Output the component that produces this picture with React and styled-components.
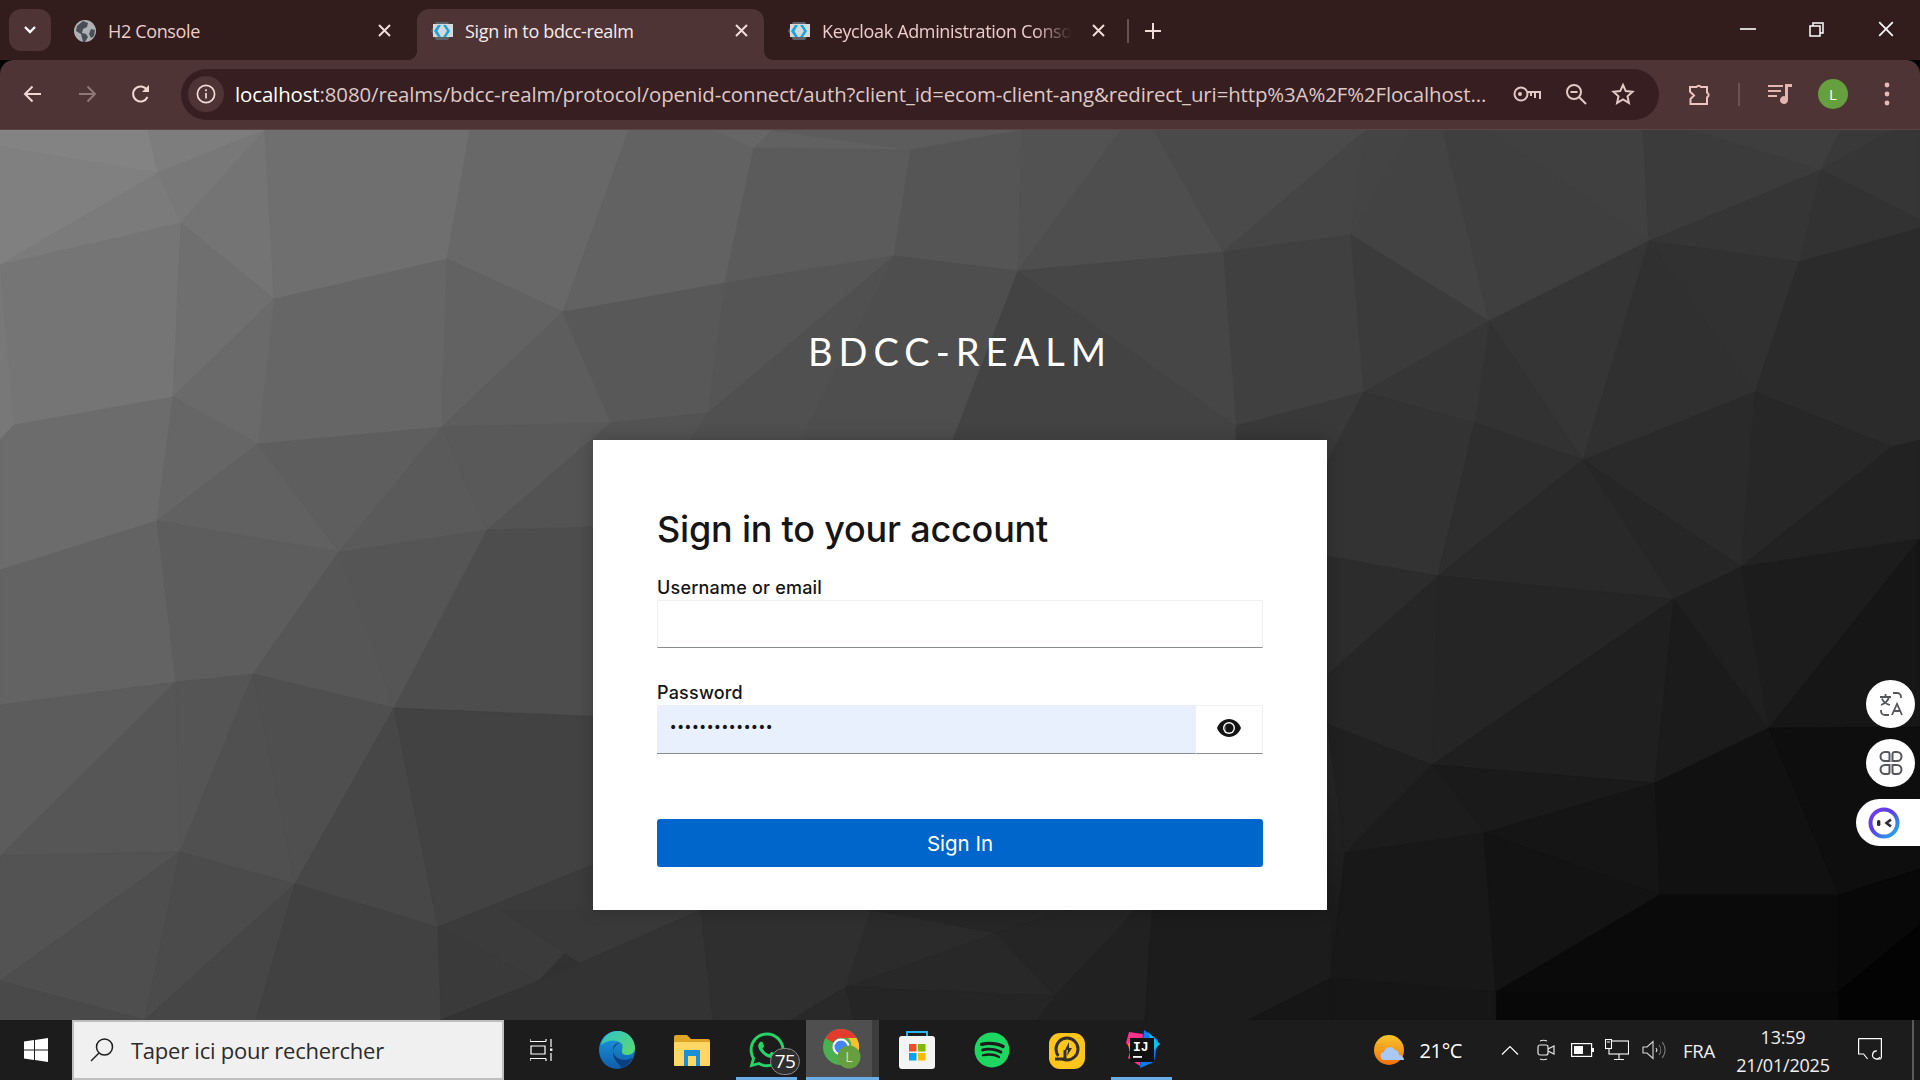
import styled, { createGlobalStyle } from "styled-components";
import { FaWhatsapp, FaSpotify } from "react-icons/fa";

const UI_FONT = `"Open Sans", "Noto Sans", sans-serif`;
const CARD_FONT = `Inter, "Noto Sans", sans-serif`;

const GlobalStyle = createGlobalStyle`
  html, body {
    margin: 0;
    padding: 0;
    height: 100%;
    overflow: hidden;
    background: #000;
  }
  * { box-sizing: border-box; }
`;

// [grey level, points] : low poly background, traced from the login theme picture
const MESH = [
  [0x85, "0,0 148,0 158,43 0,17"],
  [0x7e, "148,0 265,0 158,43"],
  [0x82, "0,17 158,43 0,135"],
  [0x7c, "158,43 181,93 0,135"],
  [0x76, "158,43 265,0 181,93"],
  [0x72, "181,93 265,0 274,169"],
  [0x6d, "265,0 470,0 447,129 274,169"],
  [0x64, "470,0 629,0 563,182 447,129"],
  [0x75, "0,135 181,93 173,267 14,295"],
  [0x6c, "181,93 274,169 173,267"],
  [0x63, "274,169 447,129 442,297 258,314"],
  [0x68, "274,169 258,314 173,267"],
  [0x5e, "447,129 563,182 442,297"],
  [0x5a, "563,182 611,293 442,297"],
  [0x5e, "629,0 713,0 754,18 725,153 563,182"],
  [0x53, "563,182 725,153 708,283 611,292"],
  [0x7a, "0,135 14,295 0,310"],
  [0x6a, "14,295 173,267 157,391 0,440 0,310"],
  [0x63, "173,267 258,314 157,391"],
  [0x5e, "258,314 339,422 157,391"],
  [0x5a, "258,314 442,297 339,422"],
  [0x56, "442,297 487,400 339,422"],
  [0x55, "442,297 611,293 487,400"],
  [0x4f, "611,293 708,283 680,395 487,400"],
  [0x62, "0,440 157,391 176,552 0,575"],
  [0x5c, "157,391 339,422 253,544 176,552"],
  [0x53, "339,422 394,578 253,544"],
  [0x52, "339,422 487,400 394,578"],
  [0x4a, "487,400 680,395 680,590 394,578"],
  [0x5c, "0,575 176,552 0,726"],
  [0x55, "176,552 180,722 0,726"],
  [0x53, "176,552 253,544 180,722"],
  [0x4d, "253,544 295,754 180,722"],
  [0x4b, "253,544 394,578 295,754"],
  [0x43, "394,578 438,797 295,754"],
  [0x3e, "394,578 680,590 680,700 438,797"],
  [0x52, "0,726 180,722 0,851"],
  [0x4d, "180,722 145,890 0,851"],
  [0x49, "180,722 295,754 145,890"],
  [0x44, "295,754 256,890 145,890"],
  [0x3e, "295,754 438,797 441,890 256,890"],
  [0x36, "438,797 680,700 538,851"],
  [0x35, "438,797 538,851 441,890"],
  [0x45, "0,851 145,890 0,890"],
  [0x35, "500,780 701,780 580,833"],
  [0x2d, "441,890 538,851 580,833 701,780 713,890"],
  [0x2c, "701,780 871,780 846,857 791,890 713,890"],
  [0x26, "871,780 996,803 846,857"],
  [0x24, "846,857 1055,866 996,803"],
  [0x1f, "871,780 1070,780 996,803"],
  [0x20, "996,803 1070,780 1135,780 1055,866"],
  [0x24, "791,890 846,857 854,890"],
  [0x21, "846,857 1055,866 1038,890 854,890"],
  [0x1c, "1135,780 1152,780 1145,890 1038,890 1055,866"],
  [0x17, "1152,780 1331,780 1331,848 1249,890 1145,890"],
  [0x11, "1331,848 1331,890 1249,890"],
  [0x66, "713,0 772,0 754,18"],
  [0x5e, "754,18 911,20 772,0"],
  [0x58, "911,20 1022,0 772,0"],
  [0x56, "725,153 754,18 911,20 894,126"],
  [0x50, "911,20 1022,0 1018,141 894,126"],
  [0x4d, "1022,0 1121,0 1018,141"],
  [0x48, "1121,0 1154,0 1223,122 1018,141"],
  [0x44, "1154,0 1366,0 1223,122"],
  [0x3f, "1366,0 1351,105 1223,122"],
  [0x3a, "1223,122 1351,105 1364,262 1236,296"],
  [0x40, "1018,141 1223,122 1236,296"],
  [0x4a, "894,126 1018,141 953,310 800,310"],
  [0x50, "725,153 894,126 708,283"],
  [0x4a, "708,283 894,126 800,310 690,310"],
  [0x3e, "1018,141 1236,296 1236,310 953,310"],
  [0x33, "1236,296 1364,262 1327,332 1236,332"],
  [0x3c, "1351,105 1366,0 1411,0"],
  [0x3e, "1351,105 1411,0 1443,0 1489,191"],
  [0x3a, "1443,0 1488,0 1649,111 1489,191"],
  [0x3d, "1488,0 1643,0 1649,111"],
  [0x38, "1643,0 1692,0 1821,40 1649,111"],
  [0x3f, "1692,0 1841,0 1821,40"],
  [0x38, "1841,0 1892,0 1821,40"],
  [0x34, "1821,40 1892,0 1920,0 1920,90"],
  [0x30, "1821,40 1920,90 1920,98 1799,132"],
  [0x32, "1649,111 1821,40 1799,132"],
  [0x35, "1351,105 1489,191 1364,262"],
  [0x30, "1489,191 1649,111 1583,330"],
  [0x2c, "1489,191 1583,330 1475,293"],
  [0x30, "1489,191 1475,293 1364,262"],
  [0x2c, "1649,111 1799,132 1755,262"],
  [0x2b, "1649,111 1755,262 1583,330"],
  [0x2a, "1799,132 1920,98 1920,310 1892,317"],
  [0x29, "1799,132 1892,317 1755,262"],
  [0x25, "1755,262 1892,317 1741,437"],
  [0x27, "1755,262 1741,437 1583,330"],
  [0x22, "1583,330 1741,437 1674,469"],
  [0x21, "1892,317 1920,310 1920,409 1741,437"],
  [0x2e, "1327,332 1364,262 1475,293 1438,446 1327,426"],
  [0x28, "1475,293 1583,330 1438,446"],
  [0x24, "1583,330 1674,469 1438,446"],
  [0x27, "1327,426 1438,446 1327,545"],
  [0x21, "1438,446 1674,469 1432,635"],
  [0x21, "1327,545 1438,446 1432,635 1327,594"],
  [0x1c, "1674,469 1655,653 1432,635"],
  [0x18, "1674,469 1769,598 1655,653"],
  [0x1c, "1674,469 1741,437 1769,598"],
  [0x18, "1741,437 1920,409 1769,598"],
  [0x13, "1769,598 1920,409 1920,597"],
  [0x19, "1327,594 1432,635 1345,723"],
  [0x14, "1432,635 1655,653 1484,703"],
  [0x16, "1432,635 1484,703 1345,723"],
  [0x11, "1484,703 1655,653 1660,765"],
  [0x0d, "1655,653 1769,598 1839,765 1660,765"],
  [0x0b, "1769,598 1920,597 1920,739 1839,765"],
  [0x13, "1345,723 1484,703 1496,862 1331,849"],
  [0x0e, "1484,703 1660,765 1496,862"],
  [0x04, "1660,765 1839,765 1838,862 1496,862"],
  [0x06, "1839,765 1920,739 1920,795 1838,862"],
  [0x00, "1838,862 1920,795 1920,890 1838,890"],
  [0x03, "1496,862 1838,862 1838,890 1496,890"],
  [0x14, "1331,848 1496,862 1496,890 1331,890"],
];

// soften each facet towards the overall diagonal gradient of the picture
const facetFill = (grey, points) => {
  const pts = points.split(" ").map((p) => p.split(",").map(Number));
  const cx = pts.reduce((s, p) => s + p[0], 0) / pts.length;
  const cy = pts.reduce((s, p) => s + p[1], 0) / pts.length;
  const ramp = Math.max(0, 133 - 0.04 * cx - 0.061 * cy);
  const v = Math.round(grey * 0.5 + ramp * 0.5);
  return `rgb(${v},${v},${v})`;
};

const ChromeBadgeText = styled.text`
  fill: #cfe0b8;
  font-size: 14px;
  text-anchor: middle;
  font-family: ${UI_FONT};
`;

const IdeaText = styled.text`
  fill: #fff;
  font-size: 13px;
  font-weight: 700;
  font-family: "Liberation Mono", monospace;
`;

const ChromeGlyph = styled.svg`
  margin-left: 4px;
`;

const KeycloakIcon = () => (
  <svg width="24" height="20" viewBox="0 0 24 20">
    <path d="M6 1h12l5 9-5 9H6l-5-9z" fill="#5f6266" />
    <path d="M3 3h20v13H3z" fill="#d6d8da" />
    <path d="M8 4l-4 6 4 6h3L7.5 10 11 4z" fill="#19a6dd" />
    <path d="M13 4l4 6-4 6h3l4-6-4-6z" fill="#19a6dd" />
  </svg>
);

const Globe = () => (
  <svg width="22" height="22" viewBox="0 0 22 22">
    <circle cx="11" cy="11" r="11" fill="#aeb1b4" />
    <path d="M9 1l5 2-1 4-4 2-1 4 4 1 2 3-3 5-2 0-2-8-5-3 1-5z" fill="#4a4d55" />
    <path d="M17 9l4 1-1 6-3 2-2-4z" fill="#4a4d55" />
  </svg>
);

const CloseGlyph = ({ size = 13, color = "#f1dcd8", width = 2 }) => (
  <svg width={size} height={size} viewBox="0 0 13 13">
    <path d="M1 1l11 11M12 1L1 12" stroke={color} strokeWidth={width} fill="none" />
  </svg>
);

const tabs = [
  { title: "H2 Console", icon: <Globe /> },
  { title: "Sign in to bdcc-realm", icon: <KeycloakIcon />, active: true },
  { title: "Keycloak Administration Console", icon: <KeycloakIcon />, fade: true },
];

const TabBar = () => (
  <TabStrip>
    <TabSearch>
      <svg width="14" height="10" viewBox="0 0 14 10">
        <path d="M2 2l5 5 5-5" stroke="#fff" strokeWidth="2.4" fill="none" />
      </svg>
    </TabSearch>
    {tabs.map((tab) => (
      <Tab key={tab.title} $active={tab.active}>
        <TabIcon>{tab.icon}</TabIcon>
        <TabTitle $active={tab.active} $fade={tab.fade}>{tab.title}</TabTitle>
        <TabClose><CloseGlyph /></TabClose>
      </Tab>
    ))}
    <TabDivider />
    <NewTab>
      <svg width="16" height="16" viewBox="0 0 16 16">
        <path d="M8 0v16M0 8h16" stroke="#f1dcd8" strokeWidth="2" />
      </svg>
    </NewTab>
    <WindowControls>
      <WindowButton>
        <svg width="16" height="2" viewBox="0 0 16 2"><path d="M0 1h16" stroke="#fff" strokeWidth="1.6" /></svg>
      </WindowButton>
      <WindowButton>
        <svg width="15" height="15" viewBox="0 0 15 15" fill="none" stroke="#fff" strokeWidth="1.5">
          <rect x="1" y="4" width="10" height="10" />
          <path d="M4 4V1h10v10h-3" />
        </svg>
      </WindowButton>
      <WindowButton>
        <CloseGlyph size={16} color="#fff" width={1.4} />
      </WindowButton>
    </WindowControls>
  </TabStrip>
);

const NavBar = () => (
  <Toolbar>
    <NavButton>
      <svg width="20" height="18" viewBox="0 0 20 18" fill="none" stroke="#f1d6d2" strokeWidth="2">
        <path d="M18 9H2M9.5 1.5L2 9l7.5 7.5" />
      </svg>
    </NavButton>
    <NavButton>
      <svg width="20" height="18" viewBox="0 0 20 18" fill="none" stroke="#8f7877" strokeWidth="2">
        <path d="M2 9h16M10.5 1.5L18 9l-7.5 7.5" />
      </svg>
    </NavButton>
    <NavButton>
      <svg width="20" height="20" viewBox="0 0 20 20" fill="none" stroke="#f1d6d2" strokeWidth="2">
        <path d="M16.5 13a7.5 7.5 0 1 1-.6-7.2" />
        <path d="M18 1v7h-7" fill="#f1d6d2" stroke="none" />
      </svg>
    </NavButton>
    <Omnibox>
      <SiteInfo>
        <svg width="20" height="20" viewBox="0 0 20 20" fill="none" stroke="#f1dcd8" strokeWidth="1.7">
          <circle cx="10" cy="10" r="8.6" />
          <path d="M10 9v5.5M10 5.2v2" />
        </svg>
      </SiteInfo>
      <Url>
        <b>localhost</b>:8080/realms/bdcc-realm/protocol/openid-connect/auth?client_id=ecom-client-ang&amp;redirect_uri=http%3A%2F%2Flocalhost...
      </Url>
      <OmniIcons>
        <svg width="28" height="16" viewBox="0 0 28 16" fill="none" stroke="#e3c9c5" strokeWidth="2">
          <circle cx="8" cy="8" r="6.5" />
          <circle cx="7" cy="8" r="2" fill="#e3c9c5" stroke="none" />
          <path d="M14.5 6H27v7M22 7v5M18 7v3" />
        </svg>
        <svg width="22" height="22" viewBox="0 0 22 22" fill="none" stroke="#e3c9c5" strokeWidth="2">
          <circle cx="9" cy="9" r="7" />
          <path d="M5.5 9h7M14 14l7 7" />
        </svg>
        <svg width="24" height="24" viewBox="0 0 24 24" fill="none" stroke="#e3c9c5" strokeWidth="2">
          <path d="M12 3l2.800 6.100 6.700.7-5 4.500 1.400 6.600L12 17.500l-5.900 3.400 1.400-6.600-5-4.500 6.700-.7z" />
        </svg>
      </OmniIcons>
    </Omnibox>
    <ToolIcons>
      <svg width="24" height="24" viewBox="0 0 24 24" fill="none" stroke="#eec4c0" strokeWidth="2">
        <path d="M3 5h6.500a2.800 2.800 0 0 1 4.500 0H20v5.600a2.600 2.600 0 0 1 0 4.800V22H3.500v-5L7 13.500 3 9.500z" />
      </svg>
      <ToolDivider />
      <svg width="24" height="22" viewBox="0 0 24 22" fill="#e4b5b1">
        <path d="M0 2h15v2H0zM0 7h13v2H0zM0 12h9v2H0z" />
        <path d="M17 1h7v3h-4v13a4 4 0 1 1-3-3.800z" />
      </svg>
      <Avatar>L</Avatar>
      <svg width="8" height="24" viewBox="0 0 8 24" fill="#e6bcb8">
        <circle cx="4" cy="3" r="2.400" /><circle cx="4" cy="12" r="2.400" /><circle cx="4" cy="21" r="2.400" />
      </svg>
    </ToolIcons>
  </Toolbar>
);

const LoginPage = () => (
  <Page>
    <Mesh viewBox="0 0 1920 890" preserveAspectRatio="none">
      <defs>
        <linearGradient id="base" x1="0" y1="0" x2="1" y2="1">
          <stop offset="0" stopColor="#808080" />
          <stop offset="1" stopColor="#000" />
        </linearGradient>
      </defs>
      <rect width="1920" height="890" fill="url(#base)" />
      {MESH.map(([grey, points]) => {
        const fill = facetFill(grey, points);
        return <polygon key={points} points={points} fill={fill} stroke={fill} strokeWidth="0.6" />;
      })}
    </Mesh>
    <RealmName>BDCC-REALM</RealmName>
    <Card>
      <CardTitle>Sign in to your account</CardTitle>
      <Field>
        <Label htmlFor="username">Username or email</Label>
        <TextInput id="username" type="text" />
      </Field>
      <Field>
        <Label htmlFor="password">Password</Label>
        <PasswordRow>
          <PasswordInput id="password" type="password" defaultValue="aaaaaaaaaaaaaa" readOnly />
          <EyeButton>
            <svg width="24" height="18" viewBox="0 0 24 18">
              <path d="M12 0C6.500 0 2.200 3.500 0 9c2.200 5.500 6.500 9 12 9s9.800-3.500 12-9c-2.200-5.500-6.500-9-12-9z" fill="#151515" />
              <circle cx="12" cy="9" r="6" fill="#fff" />
              <circle cx="12" cy="9" r="4.600" fill="#151515" />
              <path d="M9.500 5.500a5 5 0 0 0 1 7.500 4.500 4.500 0 0 1-1-7.500z" fill="#fff" />
            </svg>
          </EyeButton>
        </PasswordRow>
      </Field>
      <SubmitButton>Sign In</SubmitButton>
    </Card>
    <SideDock>
      <DockCircle>
        <svg width="26" height="26" viewBox="0 0 26 26" fill="none" stroke="#55565c" strokeWidth="1.8">
          <path d="M2 6h11M7.500 3v3M11 6c-1 4-4 6.500-8 8M4 7.500c1 3 4 5.500 8 6.500" />
          <path d="M15 2h4a4 4 0 0 1 4 4v1M11 24H7a4 4 0 0 1-4-4v-1" />
          <path d="M14 24l5-11 5 11M16 20h6" />
        </svg>
      </DockCircle>
      <DockCircle>
        <svg width="26" height="26" viewBox="0 0 26 26" fill="none" stroke="#55565c" strokeWidth="2">
          <path d="M7 2h2.500a2 2 0 0 1 2 2v7H7a4.500 4.500 0 0 1 0-9zM19 2h-2.500a2 2 0 0 0-2 2v7H19a4.500 4.500 0 0 0 0-9z" />
          <path d="M7 24h2.500a2 2 0 0 0 2-2v-7H7a4.500 4.500 0 0 0 0 9zM19 24h-2.500a2 2 0 0 1-2-2v-7H19a4.500 4.500 0 0 1 0 9z" />
        </svg>
      </DockCircle>
      <DockPill>
        <svg width="32" height="32" viewBox="0 0 32 32" fill="none">
          <defs>
            <linearGradient id="ring" x1="0" y1="0" x2="1" y2="1">
              <stop offset="0" stopColor="#7a3ff0" />
              <stop offset="0.4" stopColor="#5a3be8" />
              <stop offset="1" stopColor="#1fb6e8" />
            </linearGradient>
          </defs>
          <circle cx="16" cy="16" r="13.500" stroke="url(#ring)" strokeWidth="4" />
          <rect x="9" y="13" width="3.400" height="6" rx="1.500" fill="#2b2b38" />
          <path d="M23 12.500L18.500 16l4.500 3.500" stroke="#2b2b38" strokeWidth="2.600" />
        </svg>
      </DockPill>
    </SideDock>
  </Page>
);

const StoreIcon = () => (
  <svg width="36" height="38" viewBox="0 0 36 38">
    <path d="M8 7V1h20v6" fill="none" stroke="#29b6f0" strokeWidth="2" />
    <rect x="0" y="5" width="36" height="33" rx="3" fill="#f4f4f4" />
    <rect x="10" y="13" width="7.500" height="7.500" fill="#f25022" />
    <rect x="19" y="13" width="7.500" height="7.500" fill="#7fba00" />
    <rect x="10" y="22" width="7.500" height="7.500" fill="#00a4ef" />
    <rect x="19" y="22" width="7.500" height="7.500" fill="#ffb900" />
  </svg>
);

const taskApps = [
  {
    name: "edge",
    icon: (
      <svg width="36" height="38" viewBox="0 0 36 38">
        <defs>
          <linearGradient id="edgeA" x1="0" y1="0" x2="1" y2="1">
            <stop offset="0" stopColor="#2fc2c9" />
            <stop offset="1" stopColor="#5ddb6b" />
          </linearGradient>
          <linearGradient id="edgeB" x1="0" y1="0" x2="0" y2="1">
            <stop offset="0" stopColor="#1b9de2" />
            <stop offset="1" stopColor="#0f5da8" />
          </linearGradient>
        </defs>
        <ellipse cx="18" cy="19" rx="18" ry="19" fill="url(#edgeB)" />
        <path d="M2 14C4 5 11 0 19 0c10 0 17 8 17 17 0 4-3 7-8 7-3 0-5-1-5-3 0-5 2-6-1-9-5-4-14-3-20 2z" fill="url(#edgeA)" />
        <path d="M22 13c-4-2-8 1-8 6 0 6 5 10 12 10 3 0 6-1 8-3-3 7-9 11-12 11 2-2-8-6-8-16 0-5 5-10 8-8z" fill="#0c3f7d" />
      </svg>
    ),
  },
  {
    name: "files",
    icon: (
      <svg width="36" height="32" viewBox="0 0 36 32">
        <path d="M0 3a2 2 0 0 1 2-2h11l4 4h17a2 2 0 0 1 2 2v3H0z" fill="#e0a526" />
        <rect x="0" y="8" width="36" height="24" rx="1" fill="#ffd765" />
        <rect x="10" y="16" width="16" height="16" fill="#1a8fd6" />
        <rect x="14" y="22" width="8" height="10" fill="#ffd765" />
      </svg>
    ),
  },
  {
    name: "whatsapp",
    underline: true,
    icon: <FaWhatsapp size={40} color="#25d366" />,
    badge: "75",
  },
  {
    name: "chrome",
    active: true,
    icon: (
      <ChromeGlyph width="44" height="44" viewBox="0 0 44 44">
        <circle cx="19" cy="19" r="18" fill="#4caf50" />
        <path d="M19 1a18 18 0 0 1 15.600 9H19a9 9 0 0 0-8 4.500L3.400 10A18 18 0 0 1 19 1z" fill="#e33b2e" />
        <path d="M34.600 10A18 18 0 0 1 19 37l7.500-13.500A9 9 0 0 0 26 10z" fill="#fbc02d" />
        <circle cx="19" cy="19" r="8.500" fill="#fff" />
        <circle cx="19" cy="19" r="6.500" fill="#4285f4" />
        <circle cx="27" cy="29" r="11.500" fill="#659f3e" />
        <ChromeBadgeText x="27" y="34">L</ChromeBadgeText>
      </ChromeGlyph>
    ),
  },
  { name: "store", icon: <StoreIcon /> },
  { name: "spotify", icon: <FaSpotify size={36} color="#1ed760" /> },
  {
    name: "ld",
    icon: (
      <svg width="36" height="38" viewBox="0 0 36 38">
        <rect x="0" y="2" width="36" height="36" rx="11" fill="#fec51d" />
        <circle cx="18" cy="18" r="11" fill="none" stroke="#33302a" strokeWidth="3" />
        <path d="M6 28h10v-9" fill="#fec51d" stroke="#33302a" strokeWidth="3" />
        <path d="M20 11l-4 8h3l-1 6 5-8h-3z" fill="#33302a" />
      </svg>
    ),
  },
  {
    name: "idea",
    underline: true,
    icon: (
      <svg width="36" height="40" viewBox="0 0 36 40">
        <path d="M5 2l14 2-3 32-12-8 3-9-5-6z" fill="#fc318c" />
        <path d="M4 14l10-6 6 16-12 8z" fill="#ff8a3c" />
        <path d="M20 0l14 10-4 22-14 6z" fill="#087cfa" />
        <path d="M24 2l12 12-6 6z" fill="#07c3f2" />
        <rect x="6" y="8" width="24" height="24" fill="#111" />
        <IdeaText x="9" y="21">IJ</IdeaText>
        <rect x="9" y="26" width="9" height="1.800" fill="#fff" />
      </svg>
    ),
  },
];

const TaskBar = () => (
  <Taskbar>
    <StartButton>
      <svg width="24" height="24" viewBox="0 0 24 24" fill="#fff">
        <path d="M0 3.500l10-1.400v9.300H0zM11 2l13-2v11.400H11zM0 12.600h10v9.300L0 20.500zM11 12.600h13V24l-13-1.900z" />
      </svg>
    </StartButton>
    <SearchBox>
      <svg width="24" height="24" viewBox="0 0 24 24" fill="none" stroke="#1d1d1d" strokeWidth="1.500">
        <circle cx="14.500" cy="9" r="8" />
        <path d="M9 15L1 23" />
      </svg>
      <SearchText>Taper ici pour rechercher</SearchText>
    </SearchBox>
    <TaskView>
      <svg width="24" height="24" viewBox="0 0 24 24" fill="none" stroke="#fff" strokeWidth="1.200">
        <path d="M0 3.500h16M0 1v2.500M16 1v2.500M1 8h14v8H1zM0 20.500h16M0 20.500V23M16 20.500V23M21 1v8M21 15v8" />
        <rect x="20" y="10.500" width="2.400" height="2.400" fill="#fff" stroke="none" />
      </svg>
    </TaskView>
    {taskApps.map((app) => (
      <TaskApp key={app.name} $active={app.active} $underline={app.underline}>
        {app.icon}
        {app.badge && <TaskBadge>{app.badge}</TaskBadge>}
      </TaskApp>
    ))}
    <Tray>
      <Weather>
        <svg width="30" height="30" viewBox="0 0 30 30">
          <defs>
            <linearGradient id="sun" x1="0" y1="0" x2="0" y2="1">
              <stop offset="0" stopColor="#f7c52b" />
              <stop offset="1" stopColor="#f0700e" />
            </linearGradient>
          </defs>
          <circle cx="15" cy="15" r="15" fill="url(#sun)" />
          <path d="M11 25a4 4 0 0 1-1-8 6 6 0 0 1 11-2 5 5 0 0 1 4 5 5 5 0 0 1 5 5z" fill="#a9c8f4" />
        </svg>
        <TrayText>21°C</TrayText>
      </Weather>
      <TrayIcon $w={38}>
        <svg width="18" height="10" viewBox="0 0 18 10" fill="none" stroke="#fff" strokeWidth="1.200"><path d="M1 9.500l8-8 8 8" /></svg>
      </TrayIcon>
      <TrayIcon $w={34}>
        <svg width="18" height="24" viewBox="0 0 18 24" fill="none" stroke="#e6e6e6" strokeWidth="1.200">
          <rect x="1" y="7" width="10" height="10" rx="2" />
          <path d="M11 11l6-3v8l-6-3M3 3a9 9 0 0 1 7 0M3 21a9 9 0 0 0 7 0" />
        </svg>
      </TrayIcon>
      <TrayIcon $w={38}>
        <svg width="23" height="14" viewBox="0 0 23 14">
          <rect x="0.600" y="0.600" width="20" height="12.800" fill="none" stroke="#fff" strokeWidth="1.200" />
          <rect x="3" y="3" width="9" height="8" fill="#fff" />
          <rect x="21" y="5" width="2" height="4" fill="#fff" />
        </svg>
      </TrayIcon>
      <TrayIcon $w={32}>
        <svg width="24" height="22" viewBox="0 0 24 22" fill="none" stroke="#fff" strokeWidth="1.100">
          <rect x="4" y="2" width="19.500" height="13" />
          <rect x="0.500" y="0.500" width="6" height="9" fill="#1c1c1c" />
          <path d="M2 3h3M14 15v5M9 20.500h10" />
        </svg>
      </TrayIcon>
      <TrayIcon $w={42}>
        <svg width="24" height="20" viewBox="0 0 24 20" fill="none" stroke="#d8d8d8" strokeWidth="1.100">
          <path d="M1 7h4l6-5.500v17L5 13H1z" />
          <path d="M14 8a3 3 0 0 1 0 4" />
          <path d="M17 5a8 8 0 0 1 0 10M20 2a12 12 0 0 1 0 16" stroke="#777" />
        </svg>
      </TrayIcon>
      <TrayLang>FRA</TrayLang>
      <Clock>
        <span>13:59</span>
        <span>21/01/2025</span>
      </Clock>
      <Notify>
        <svg width="24" height="24" viewBox="0 0 24 24" fill="none" stroke="#fff" strokeWidth="1.200">
          <path d="M.6.600h22.800V19a3 3 0 0 1-1 2h-4M.6.600V16h5l4 5" />
          <path d="M19 13a4 4 0 1 0 3 6" />
        </svg>
      </Notify>
    </Tray>
  </Taskbar>
);

const App = () => (
  <Screen>
    <GlobalStyle />
    <TabBar />
    <NavBar />
    <LoginPage />
    <TaskBar />
  </Screen>
);

export default App;

const Screen = styled.div`
  width: 1920px;
  height: 1080px;
  display: flex;
  flex-direction: column;
  overflow: hidden;
  font-family: ${UI_FONT};
`;

const TabStrip = styled.div`
  height: 60px;
  flex: none;
  display: flex;
  align-items: flex-end;
  background: #321c1c;
  padding-left: 9px;
`;

const TabSearch = styled.div`
  width: 42px;
  height: 42px;
  margin-bottom: 9px;
  margin-right: 9px;
  border-radius: 12px;
  background: #4f3436;
  display: flex;
  align-items: center;
  justify-content: center;
`;

const Tab = styled.div`
  position: relative;
  width: 347px;
  height: 51px;
  margin-right: 10px;
  padding: 0 16px 8px 13px;
  display: flex;
  align-items: center;
  border-radius: 12px 12px 0 0;
  background: ${(p) => (p.$active ? "#4f3436" : "transparent")};

  ${(p) =>
    p.$active &&
    `
    &::before, &::after {
      content: "";
      position: absolute;
      bottom: 0;
      width: 10px;
      height: 10px;
    }
    &::before {
      left: -10px;
      background: radial-gradient(circle at 0 0, transparent 10px, #4f3436 10.5px);
    }
    &::after {
      right: -10px;
      background: radial-gradient(circle at 100% 0, transparent 10px, #4f3436 10.5px);
    }
  `}
`;

const TabIcon = styled.div`
  width: 24px;
  height: 24px;
  margin-right: 11px;
  flex: none;
  display: flex;
  align-items: center;
  justify-content: center;
`;

const TabTitle = styled.span`
  width: 250px;
  flex: none;
  font-size: 18px;
  letter-spacing: -0.35px;
  white-space: nowrap;
  overflow: hidden;
  color: ${(p) => (p.$active ? "#f6ecea" : "#eccdc9")};
  ${(p) =>
    p.$fade &&
    "mask-image: linear-gradient(to right, #000 85%, transparent 100%);"}
`;

const TabClose = styled.div`
  position: absolute;
  right: 16px;
  top: 15px;
  display: flex;
`;

const TabDivider = styled.div`
  width: 2px;
  height: 24px;
  margin: 0 0 17px -4px;
  background: #6d5152;
`;

const NewTab = styled.div`
  display: flex;
  margin: 0 0 21px 16px;
`;

const WindowControls = styled.div`
  display: flex;
  margin-left: auto;
  align-self: stretch;
`;

const WindowButton = styled.div`
  width: 69px;
  display: flex;
  align-items: center;
  justify-content: center;
  padding-bottom: 2px;
`;

const Toolbar = styled.div`
  height: 70px;
  flex: none;
  display: flex;
  align-items: center;
  padding: 0 0 1px 6px;
  background: #4f3436;
  border-radius: 14px 14px 0 0;
  border-bottom: 1px solid #5c4446;
`;

const NavButton = styled.div`
  width: 54px;
  height: 40px;
  display: flex;
  align-items: center;
  justify-content: center;
`;

const Omnibox = styled.div`
  width: 1478px;
  height: 51px;
  margin-left: 13px;
  padding-left: 7px;
  display: flex;
  align-items: center;
  border-radius: 26px;
  background: #371e20;
`;

const SiteInfo = styled.div`
  width: 36px;
  height: 36px;
  flex: none;
  border-radius: 50%;
  background: #4f3436;
  display: flex;
  align-items: center;
  justify-content: center;
`;

const Url = styled.div`
  width: 1260px;
  margin-left: 11px;
  flex: none;
  font-size: 20.4px;
  letter-spacing: -0.1px;
  white-space: nowrap;
  overflow: hidden;
  color: #dfc9c6;

  b {
    font-weight: 400;
    color: #fff;
  }
`;

const OmniIcons = styled.div`
  flex: 1;
  display: flex;
  align-items: center;
  padding-left: 18px;
  gap: 24px;
`;

const ToolIcons = styled.div`
  flex: 1;
  display: flex;
  align-items: center;
  padding-left: 28px;
`;

const ToolDivider = styled.div`
  width: 2px;
  height: 23px;
  margin: 0 28px 0 27px;
  background: #6d5152;
`;

const Avatar = styled.div`
  width: 30px;
  height: 30px;
  margin: 0 35px 0 26px;
  border-radius: 50%;
  background: #659f3e;
  color: #fff;
  font-size: 15px;
  display: flex;
  align-items: center;
  justify-content: center;
`;

const Page = styled.main`
  position: relative;
  flex: 1;
  display: flex;
  flex-direction: column;
  align-items: center;
  overflow: hidden;
`;

const Mesh = styled.svg`
  position: absolute;
  inset: 0;
  width: 100%;
  height: 100%;
`;

const RealmName = styled.h1`
  position: relative;
  margin: 197px 0 0;
  height: 113px;
  font-family: Lato, "Open Sans", sans-serif;
  font-size: 38px;
  line-height: 48px;
  font-weight: 400;
  letter-spacing: 6px;
  color: #fff;
`;

const Card = styled.section`
  position: relative;
  width: 734px;
  height: 470px;
  padding: 67px 64px 0;
  background: #fff;
  box-shadow: 0 0 16px rgba(3, 3, 3, 0.22);
  font-family: ${CARD_FONT};
  display: flex;
  flex-direction: column;
`;

const CardTitle = styled.h2`
  margin: 0 0 24px;
  font-size: 36px;
  line-height: 45px;
  font-weight: 500;
  letter-spacing: -0.2px;
  color: #151515;
`;

const Field = styled.div`
  display: flex;
  flex-direction: column;
  margin-bottom: 33px;
`;

const Label = styled.label`
  font-size: 18px;
  line-height: 24px;
  font-weight: 500;
  letter-spacing: 0.2px;
  color: #151515;
`;

const TextInput = styled.input`
  width: 100%;
  height: 48px;
  border: 1px solid #f0f0f0;
  border-bottom-color: #8a8d90;
  outline: none;
  background: #fff;
`;

const PasswordRow = styled.div`
  display: flex;
  height: 49px;
`;

const PasswordInput = styled.input`
  width: 538px;
  height: 100%;
  padding: 0 0 4px 12px;
  border: none;
  border-bottom: 1px solid #8a8d90;
  outline: none;
  background: #e8f0fe;
  color: #151515;
  font-size: 14px;
  font-family: "DejaVu Sans", sans-serif;
  letter-spacing: -0.87px;
`;

const EyeButton = styled.div`
  flex: 1;
  border: 1px solid #f0f0f0;
  border-bottom-color: #8a8d90;
  display: flex;
  align-items: center;
  justify-content: center;
  padding-bottom: 4px;
`;

const SubmitButton = styled.button`
  width: 100%;
  height: 48px;
  margin-top: 32px;
  border: none;
  border-radius: 3px;
  background: #0066cc;
  color: #fff;
  font-family: ${CARD_FONT};
  font-size: 20.5px;
`;

const SideDock = styled.div`
  position: absolute;
  top: 550px;
  right: 0;
  display: flex;
  flex-direction: column;
  align-items: flex-end;
  gap: 11px;
`;

const DockCircle = styled.div`
  width: 49px;
  height: 48px;
  margin-right: 5px;
  border-radius: 50%;
  background: #fff;
  display: flex;
  align-items: center;
  justify-content: center;
`;

const DockPill = styled.div`
  width: 64px;
  height: 47px;
  margin-top: 1px;
  padding-left: 12px;
  border-radius: 24px 0 0 24px;
  background: #fff;
  display: flex;
  align-items: center;
`;

const Taskbar = styled.footer`
  height: 60px;
  flex: none;
  display: flex;
  align-items: stretch;
  background: #1c1c1c;
`;

const StartButton = styled.div`
  width: 72px;
  display: flex;
  align-items: center;
  justify-content: center;
`;

const SearchBox = styled.div`
  width: 432px;
  display: flex;
  align-items: center;
  gap: 17px;
  padding-left: 16px;
  background: #f0f0f0;
  border: 2px solid #bebebe;
`;

const SearchText = styled.span`
  font-size: 22px;
  letter-spacing: -0.25px;
  color: #2b2b2b;
`;

const TaskView = styled.div`
  width: 75px;
  display: flex;
  align-items: center;
  justify-content: center;
`;

const TaskApp = styled.div`
  position: relative;
  width: 75px;
  display: flex;
  align-items: center;
  justify-content: center;
  background: ${(p) =>
    p.$active
      ? "linear-gradient(to right, transparent 2px, #4f4f4f 2px, #4f4f4f 68px, #3c3c3c 68px)"
      : "transparent"};

  ${(p) =>
    (p.$active || p.$underline) &&
    `
    &::after {
      content: "";
      position: absolute;
      bottom: 0;
      height: 3px;
      left: ${p.$active ? "2px" : "7px"};
      right: ${p.$active ? "0" : "7px"};
      background: #6aade4;
    }
  `}
`;

const TaskBadge = styled.span`
  position: absolute;
  left: 41px;
  top: 28px;
  width: 30px;
  height: 27px;
  border: 1px solid #8a8a8a;
  border-radius: 14px;
  background: #2f2f2f;
  color: #fff;
  font-size: 19px;
  line-height: 24px;
  letter-spacing: -0.5px;
  text-align: center;
`;

const Tray = styled.div`
  flex: 1;
  display: flex;
  align-items: center;
  justify-content: flex-end;
  color: #fff;
  border-right: 7px solid #1c1c1c;
  position: relative;

  &::after {
    content: "";
    position: absolute;
    right: -1px;
    top: 0;
    bottom: 0;
    width: 2px;
    background: #5a5a5a;
  }
`;

const Weather = styled.div`
  display: flex;
  align-items: center;
  gap: 16px;
  margin-right: 29px;
`;

const TrayText = styled.span`
  font-size: 20px;
  letter-spacing: -0.4px;
`;

const TrayIcon = styled.div`
  width: ${(p) => p.$w}px;
  display: flex;
  justify-content: center;
`;

const TrayLang = styled.span`
  width: 48px;
  text-align: center;
  font-size: 18.5px;
  letter-spacing: -0.3px;
  color: #f0f0f0;
`;

const Clock = styled.div`
  width: 120px;
  display: flex;
  flex-direction: column;
  align-items: center;
  font-size: 18px;
  line-height: 28px;
  padding-top: 1px;
  letter-spacing: -0.2px;
  color: #f0f0f0;
`;

const Notify = styled.div`
  width: 70px;
  padding-right: 16px;
  display: flex;
  justify-content: center;
`;
